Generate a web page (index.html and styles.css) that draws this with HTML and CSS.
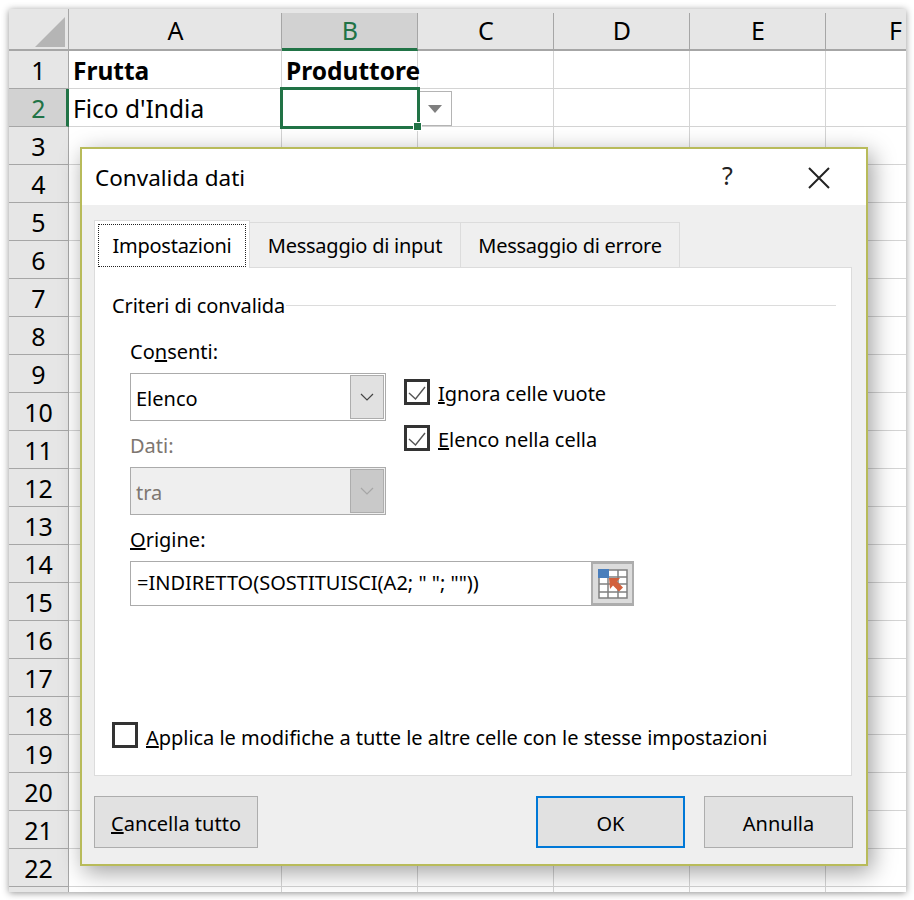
FILE: index.html
```html
<!DOCTYPE html>
<html lang="it">
<head>
<meta charset="utf-8">
<title>Convalida dati</title>
<link rel="stylesheet" href="styles.css">
</head>
<body>
<div class="sheet">
  <div class="row head">
    <div class="rh corner"><svg class="corner-mark" viewBox="0 0 30 30"><path d="M30 0V30H0Z"/></svg></div>
    <div class="ch">A</div><div class="ch sel">B</div><div class="ch">C</div><div class="ch">D</div><div class="ch">E</div><div class="ch last">F</div>
  </div>
  <div class="row"><div class="rh">1</div><div class="c b">Frutta</div><div class="c b">Produttore</div><div class="c"></div><div class="c"></div><div class="c"></div><div class="c last"></div></div>
  <div class="row"><div class="rh sel">2</div><div class="c">Fico d'India</div><div class="c active"><span class="handle"></span><span class="dd"><svg viewBox="0 0 14 8"><path d="M0 0H14L7 8Z"/></svg></span></div><div class="c"></div><div class="c"></div><div class="c"></div><div class="c last"></div></div>
  <div class="row"><div class="rh">3</div><div class="c"></div><div class="c"></div><div class="c"></div><div class="c"></div><div class="c"></div><div class="c last"></div></div>
  <div class="row"><div class="rh">4</div><div class="c"></div><div class="c"></div><div class="c"></div><div class="c"></div><div class="c"></div><div class="c last"></div></div>
  <div class="row"><div class="rh">5</div><div class="c"></div><div class="c"></div><div class="c"></div><div class="c"></div><div class="c"></div><div class="c last"></div></div>
  <div class="row"><div class="rh">6</div><div class="c"></div><div class="c"></div><div class="c"></div><div class="c"></div><div class="c"></div><div class="c last"></div></div>
  <div class="row"><div class="rh">7</div><div class="c"></div><div class="c"></div><div class="c"></div><div class="c"></div><div class="c"></div><div class="c last"></div></div>
  <div class="row"><div class="rh">8</div><div class="c"></div><div class="c"></div><div class="c"></div><div class="c"></div><div class="c"></div><div class="c last"></div></div>
  <div class="row"><div class="rh">9</div><div class="c"></div><div class="c"></div><div class="c"></div><div class="c"></div><div class="c"></div><div class="c last"></div></div>
  <div class="row"><div class="rh">10</div><div class="c"></div><div class="c"></div><div class="c"></div><div class="c"></div><div class="c"></div><div class="c last"></div></div>
  <div class="row"><div class="rh">11</div><div class="c"></div><div class="c"></div><div class="c"></div><div class="c"></div><div class="c"></div><div class="c last"></div></div>
  <div class="row"><div class="rh">12</div><div class="c"></div><div class="c"></div><div class="c"></div><div class="c"></div><div class="c"></div><div class="c last"></div></div>
  <div class="row"><div class="rh">13</div><div class="c"></div><div class="c"></div><div class="c"></div><div class="c"></div><div class="c"></div><div class="c last"></div></div>
  <div class="row"><div class="rh">14</div><div class="c"></div><div class="c"></div><div class="c"></div><div class="c"></div><div class="c"></div><div class="c last"></div></div>
  <div class="row"><div class="rh">15</div><div class="c"></div><div class="c"></div><div class="c"></div><div class="c"></div><div class="c"></div><div class="c last"></div></div>
  <div class="row"><div class="rh">16</div><div class="c"></div><div class="c"></div><div class="c"></div><div class="c"></div><div class="c"></div><div class="c last"></div></div>
  <div class="row"><div class="rh">17</div><div class="c"></div><div class="c"></div><div class="c"></div><div class="c"></div><div class="c"></div><div class="c last"></div></div>
  <div class="row"><div class="rh">18</div><div class="c"></div><div class="c"></div><div class="c"></div><div class="c"></div><div class="c"></div><div class="c last"></div></div>
  <div class="row"><div class="rh">19</div><div class="c"></div><div class="c"></div><div class="c"></div><div class="c"></div><div class="c"></div><div class="c last"></div></div>
  <div class="row"><div class="rh">20</div><div class="c"></div><div class="c"></div><div class="c"></div><div class="c"></div><div class="c"></div><div class="c last"></div></div>
  <div class="row"><div class="rh">21</div><div class="c"></div><div class="c"></div><div class="c"></div><div class="c"></div><div class="c"></div><div class="c last"></div></div>
  <div class="row"><div class="rh">22</div><div class="c"></div><div class="c"></div><div class="c"></div><div class="c"></div><div class="c"></div><div class="c last"></div></div>
  <div class="row tail"><div class="rh"></div><div class="c"></div><div class="c"></div><div class="c"></div><div class="c"></div><div class="c"></div><div class="c last"></div></div>
</div>

<div class="dialog">
  <div class="titlebar">
    <span class="title">Convalida dati</span>
    <span class="help">?</span>
    <svg class="close" viewBox="0 0 22 22"><path d="M1 1L21 21M21 1L1 21"/></svg>
  </div>
  <div class="body">
    <div class="tabs">
      <div class="tab on"><span class="focus">Impostazioni</span></div>
      <div class="tab t2">Messaggio di input</div>
      <div class="tab t3">Messaggio di errore</div>
    </div>
    <div class="panel">
      <div class="group"><span>Criteri di convalida</span><i class="rule"></i></div>
      <div class="form">
        <div class="upper">
          <div class="selects">
            <div class="lbl">Co<u>n</u>senti:</div>
            <div class="select"><span>Elenco</span><span class="arrow"><svg viewBox="0 0 14 8"><path d="M1 1L7 7L13 1"/></svg></span></div>
            <div class="lbl gap muted">Dati:</div>
            <div class="select off"><span>tra</span><span class="arrow"><svg viewBox="0 0 14 8"><path d="M1 1L7 7L13 1"/></svg></span></div>
          </div>
          <div class="checks">
            <div class="check"><span class="box"><svg viewBox="0 0 20 20"><path d="M2 11L8.500 17L18 5"/></svg></span><span class="cap"><u>I</u>gnora celle vuote</span></div>
            <div class="check"><span class="box"><svg viewBox="0 0 20 20"><path d="M2 11L8.500 17L18 5"/></svg></span><span class="cap"><u>E</u>lenco nella cella</span></div>
          </div>
        </div>
        <div class="lbl gap"><u>O</u>rigine:</div>
        <div class="source">
          <span class="formula">=INDIRETTO(SOSTITUISCI(A2; " "; ""))</span>
          <span class="pick"><svg viewBox="0 0 30 30">
            <path class="grid" d="M1 1H29V29H1ZM1 8H29M1 15H29M1 23H29M10 1V29M20 1V29"/>
            <rect class="blue" x="0" y="0" width="11" height="9"/>
            <path class="orange" d="M11 9H22L19 12.5L25 18.500L21 22.500L15 16.500L12 20Z"/>
          </svg></span>
        </div>
      </div>
      <div class="check apply"><span class="box"></span><span class="cap"><u>A</u>pplica le modifiche a tutte le altre celle con le stesse impostazioni</span></div>
    </div>
    <div class="footer">
      <div class="btn clear"><span><u>C</u>ancella tutto</span></div>
      <div class="spacer"></div>
      <div class="btn def">OK</div>
      <div class="btn">Annulla</div>
    </div>
  </div>
</div>
</body>
</html>
```

FILE: styles.css
```css
*, *::before { box-sizing: border-box; }
html, body { margin: 0; padding: 0; background: #fff; }
body { position: relative; width: 914px; height: 900px; overflow: hidden; padding: 9px 8px 0 9px; font-family: "Noto Sans", "Open Sans", sans-serif; color: #000; }

.sheet { width: 897px; height: 883px; background: #fff; box-shadow: 0 1px 7px rgba(0,0,0,.42); overflow: hidden; }
.row { display: grid; grid-template-columns: 60px 213px 136px 136px 136px 136px 80px; height: 38px; }
.row.head { height: 42px; background: #e6e6e6; }
.row.tail { height: 6px; }

.rh { display: flex; align-items: center; justify-content: center; padding-top: 2px; background: #e6e6e6; border-right: 1px solid #a6a6a6; border-bottom: 1px solid #a6a6a6; font-size: 25px; line-height: 1; }
.rh.sel { background: #d2d2d2; color: #217346; border-right: 3px solid #217346; padding-left: 2px; }
.rh.corner { position: relative; padding: 0; border-bottom: 2px solid #a6a6a6; }
.corner-mark { position: absolute; left: 26px; top: 8px; width: 30px; height: 30px; fill: #b5b5b5; }

.ch { display: flex; align-items: center; justify-content: center; margin-top: 4px; padding: 0 0 1px 1px; border-right: 1px solid #a6a6a6; border-bottom: 2px solid #a6a6a6; font-size: 25px; line-height: 1; }
.ch.sel { background: #d2d2d2; color: #217346; border-bottom: 3px solid #217346; }
.ch.last { justify-content: flex-end; padding-right: 4px; border-right: 0; }

.c { position: relative; display: flex; align-items: center; padding: 1px 0 0 4px; border-right: 1px solid #d4d4d4; border-bottom: 1px solid #d4d4d4; font-size: 24.500px; white-space: nowrap; }
.c.b { font-weight: 700; }
.c.last { border-right: 0; }
.active { overflow: visible; }
.active::before { content: ""; position: absolute; left: -2px; top: -2px; width: 140px; height: 42px; border: 3px solid #217346; z-index: 2; }
.handle { position: absolute; left: 131px; top: 33px; width: 9px; height: 9px; background: #217346; border: 1px solid #fff; z-index: 3; }
.dd { position: absolute; left: 136px; top: 2px; width: 34px; height: 35px; display: flex; align-items: center; justify-content: center; background: #fff; border: 1px solid #b4b4b4; z-index: 1; }
.dd svg { width: 14px; height: 8px; fill: #7f7f7f; }

.dialog { position: absolute; left: 80px; top: 147px; width: 788px; height: 719px; display: flex; flex-direction: column; background: #efefef; border: 2px solid #b8bb5a; box-shadow: 4px 6px 22px rgba(0,0,0,.38); font-size: 20px; }
.titlebar { position: relative; display: flex; align-items: center; height: 56px; padding: 0 0 0 13px; background: #fff; }
.title { font-size: 22.500px; }
.help { position: absolute; left: 640px; top: 9px; font-size: 25px; color: #222; }
.close { position: absolute; left: 726px; top: 18px; width: 22px; height: 22px; fill: none; stroke: #222; stroke-width: 2; }

.body { flex: 1; display: flex; flex-direction: column; padding: 15px 14px 0 12px; }
.tabs { display: flex; align-items: flex-end; height: 48px; margin-bottom: -1px; position: relative; z-index: 1; letter-spacing: -0.25px; }
.tab { display: flex; align-items: center; justify-content: center; height: 46px; background: #efefef; border: 1px solid #dcdcdc; border-left: 0; }
.tab.on { width: 156px; height: 48px; padding: 3px 3px 1px 3px; background: #fff; border-left: 1px solid #dcdcdc; border-bottom: 0; }
.tab.t2 { width: 211px; }
.tab.t3 { width: 219px; }
.focus { display: flex; align-items: center; justify-content: center; width: 100%; height: 100%; border: 1px dotted #222; }

.panel { height: 509px; display: flex; flex-direction: column; padding: 25px 15px 27px 17px; background: #fff; border: 1px solid #dcdcdc; }
.group { display: flex; align-items: flex-start; height: 26px; line-height: 26px; letter-spacing: -0.1px; }
.rule { flex: 1; height: 1px; margin: 12px 0 0 1px; background: #dcdcdc; }
.form { margin: 20px 0 0 18px; width: 504px; }
.upper { display: flex; }
.selects { width: 256px; }
.lbl { height: 26px; line-height: 26px; margin-bottom: 8px; }
.lbl.gap { margin-top: 12px; }
.muted { color: #7d7670; }
.select { display: flex; align-items: center; justify-content: space-between; height: 48px; padding: 1px 1px 1px 5px; background: #fff; border: 1px solid #ababab; }
.select > span:first-child { position: relative; top: 1px; }
.arrow { display: flex; align-items: center; justify-content: center; width: 34px; height: 44px; background: #e1e1e1; border: 1px solid #adadad; }
.arrow svg { width: 14px; height: 8px; fill: none; stroke: #444; stroke-width: 1.2; }
.select.off { background: #efefef; color: #7d7670; }
.select.off .arrow { background: #c9c9c9; }
.select.off .arrow svg { stroke: #a6a6a6; }

.checks { margin-left: 18px; padding-top: 40px; display: flex; flex-direction: column; gap: 20px; }
.check { display: flex; align-items: center; gap: 8px; height: 26px; white-space: nowrap; }
.cap { padding-top: 2px; letter-spacing: -0.03px; }
.apply .cap { padding-top: 4px; }
.box { flex: none; display: block; width: 26px; height: 26px; background: #fff; border: 3px solid #333; }
.box svg { display: block; width: 20px; height: 20px; fill: none; stroke: #555; stroke-width: 1.4; }
.apply { margin-top: auto; }

.source { display: flex; justify-content: space-between; height: 45px; padding-left: 6px; background: #fff; border: 1px solid #ababab; border-right: 0; line-height: 42px; }
.formula { white-space: nowrap; }
.pick { flex: none; display: flex; align-items: center; justify-content: center; width: 43px; height: 43px; background: #dcdcdc; border: 2px solid #adadad; }
.pick svg { display: block; width: 30px; height: 30px; }
.grid { fill: #fff; stroke: #808080; stroke-width: 1.5; }
.blue { fill: #4a7ebb; }
.orange { fill: #d2603c; }

.footer { display: flex; margin: 20px -1px 0 0; gap: 19px; }
.spacer { flex: 1; }
.btn { display: flex; align-items: center; justify-content: center; width: 149px; height: 52px; padding-top: 2px; background: #e1e1e1; border: 1px solid #adadad; }
.btn.clear { width: 164px; }
.btn.def { border: 2px solid #0078d7; }
```
